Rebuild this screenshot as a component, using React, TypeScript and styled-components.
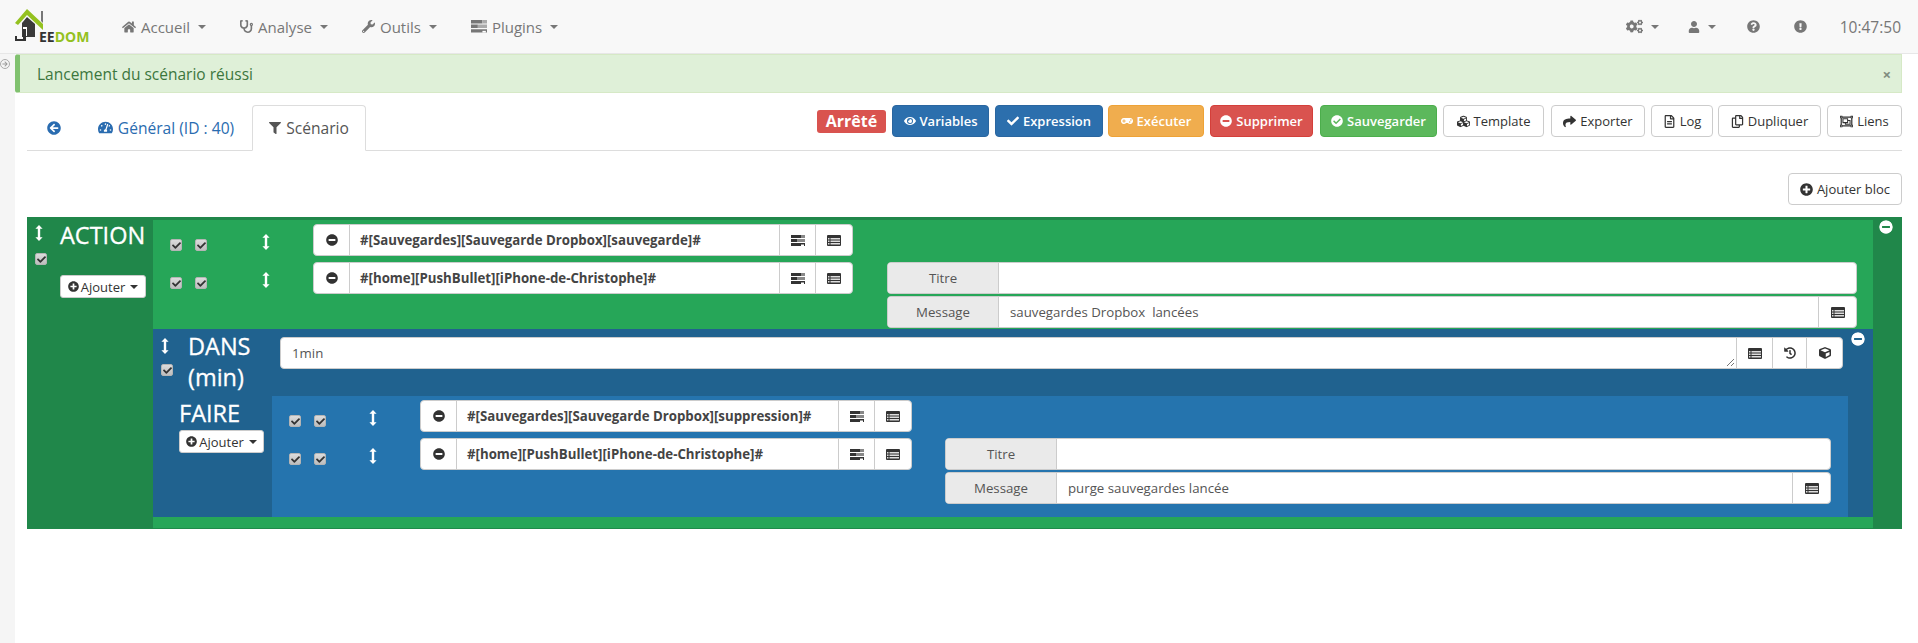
import React from 'react'
import styled, { createGlobalStyle } from 'styled-components'
import {
  FaHome,
  FaStethoscope,
  FaWrench,
  FaCogs,
  FaUser,
  FaQuestionCircle,
  FaExclamationCircle,
  FaArrowCircleLeft,
  FaTachometerAlt,
  FaFilter,
  FaEye,
  FaCheck,
  FaMinusCircle,
  FaCheckCircle,
  FaPlusCircle,
  FaCubes,
  FaShare,
  FaRegFileAlt,
  FaRegCopy,
  FaRegObjectGroup,
  FaHistory,
  FaCube,
  FaGamepad,
  FaArrowRight,
} from 'react-icons/fa'

const GlobalStyle = createGlobalStyle`
  html, body {
    margin: 0;
    padding: 0;
    background: #fff;
    font-family: "Open Sans", "Liberation Sans", sans-serif;
    font-size: 13px;
    color: #333;
  }
`

const Page = styled.div`
  width: 1918px;
  height: 643px;
  overflow: hidden;
  display: flex;
  flex-direction: column;
`

const Navbar = styled.nav`
  height: 53px;
  flex: none;
  display: flex;
  align-items: center;
  background: #f8f8f8;
  border-bottom: 1px solid #e7e7e7;
  color: #777;
  font-size: 15px;
`

const LogoBox = styled.div`
  width: 122px;
  padding-left: 15px;
  flex: none;
  box-sizing: border-box;
  display: flex;
`

const NavItem = styled.div<{ $gap: number }>`
  display: flex;
  align-items: center;
  gap: 5px;
  margin-right: ${p => p.$gap}px;
`

const NavRight = styled.div`
  margin-left: auto;
  display: flex;
  align-items: center;
  padding-right: 17px;
`

const Caret = styled.span<{ $size?: number }>`
  display: inline-block;
  margin-left: 3px;
  border-top: ${p => p.$size ?? 4}px solid currentColor;
  border-left: ${p => p.$size ?? 4}px solid transparent;
  border-right: ${p => p.$size ?? 4}px solid transparent;
`

const Clock = styled.span`
  margin-left: 33px;
  font-size: 15.500px;
`

const Body = styled.div`
  flex: 1;
  display: flex;
`

const Rail = styled.aside`
  width: 15px;
  flex: none;
  background: #f5f5f5;
  color: #999;
  padding-top: 5px;
  box-sizing: border-box;
`

const RailKnob = styled.span`
  display: flex;
  align-items: center;
  justify-content: center;
  width: 10px;
  height: 10px;
  border: 1px solid #aaa;
  border-radius: 50%;
  box-sizing: border-box;
  font-size: 6px;
`

const Main = styled.main`
  width: 1887px;
  flex: none;
`

const Alert = styled.div`
  height: 39px;
  box-sizing: border-box;
  display: flex;
  align-items: center;
  justify-content: space-between;
  background: #dff0d8;
  border: 1px solid #d6e9c6;
  border-left: 5px solid #80c16f;
  border-radius: 3px 0 0 3px;
  color: #3c763d;
  font-size: 15.500px;
  padding: 0 10px 0 17px;
`

const Close = styled.span`
  color: #7f8c80;
  font-size: 15px;
  font-weight: 700;
`

const TabBar = styled.div`
  margin: 12px 0 0 12px;
  height: 45px;
  display: flex;
  align-items: flex-end;
  justify-content: space-between;
  border-bottom: 1px solid #ddd;
`

const Tabs = styled.div`
  display: flex;
  height: 45px;
`

const Tab = styled.div<{ $active?: boolean; $width: number }>`
  width: ${p => p.$width}px;
  box-sizing: border-box;
  display: flex;
  align-items: center;
  justify-content: center;
  gap: 5px;
  font-size: 15.600px;
  color: ${p => (p.$active ? '#555' : '#2a6cb0')};
  ${p =>
    p.$active &&
    `
    background: #fff;
    border: 1px solid #ddd;
    border-bottom: 1px solid #fff;
    border-radius: 4px 4px 0 0;
    height: 46px;
  `}
`

const Actions = styled.div`
  display: flex;
  align-items: center;
  height: 32px;
  margin-bottom: 13px;
`

const Status = styled.span`
  width: 69px;
  height: 23px;
  background: #d9534f;
  color: #fff;
  font-weight: 700;
  font-size: 16px;
  border-radius: 3px;
  display: flex;
  align-items: center;
  justify-content: center;
  margin-right: 6px;
`

const colours = {
  primary: ['#2c6fad', '#2a66a0', '#fff'],
  warning: ['#f0ad4e', '#eea236', '#fff'],
  danger: ['#d9534f', '#d43f3a', '#fff'],
  success: ['#5cb85c', '#4cae4c', '#fff'],
  plain: ['#fff', '#ccc', '#333'],
}

const Button = styled.button<{ $kind: keyof typeof colours; $width: number; $gap?: number }>`
  width: ${p => p.$width}px;
  height: 32px;
  margin-right: ${p => p.$gap ?? 6}px;
  padding: 0;
  display: flex;
  align-items: center;
  justify-content: center;
  gap: 4px;
  font-family: inherit;
  font-size: 13px;
  font-weight: ${p => (p.$kind === 'plain' ? 400 : 600)};
  border-radius: 4px;
  background: ${p => colours[p.$kind][0]};
  border: 1px solid ${p => colours[p.$kind][1]};
  color: ${p => colours[p.$kind][2]};
  & svg {
    font-size: ${p => (p.$kind === 'plain' ? 13 : 12)}px;
  }
`

const AddRow = styled.div`
  display: flex;
  justify-content: flex-end;
  margin-top: 22px;
  height: 32px;
  margin-bottom: 12px;
`

const Outer = styled.section`
  margin-left: 12px;
  height: 312px;
  display: flex;
  background: #20874a;
`

const Side = styled.div<{ $width: number }>`
  width: ${p => p.$width}px;
  flex: none;
  display: flex;
  box-sizing: border-box;
`

const HandleCol = styled.div<{ $width: number; $top: number; $pad: number }>`
  width: ${p => p.$width}px;
  padding-top: ${p => p.$top}px;
  padding-left: ${p => p.$pad}px;
  box-sizing: border-box;
  flex: none;
  display: flex;
  flex-direction: column;
  align-items: flex-start;
`

const Spacer = styled.div<{ $height: number }>`
  height: ${p => p.$height}px;
  flex: none;
`

const MoveGlyph = styled.svg`
  display: block;
  flex: none;
`

const Move = () => (
  <MoveGlyph width="8" height="16" viewBox="0 0 8 16">
    <path
      d="M4 0 L7.600 3.800 L5.200 3.800 L5.200 12.200 L7.600 12.200 L4 16 L0.400 12.200 L2.800 12.200 L2.800 3.800 L0.400 3.800 Z"
      fill="#fff"
    />
  </MoveGlyph>
)

const CheckBase = styled.span`
  width: 12px;
  height: 12px;
  flex: none;
  box-sizing: border-box;
  display: flex;
  align-items: center;
  justify-content: center;
  background: linear-gradient(#dcdcdc, #bebebe);
  border: 1px solid #b5b5b5;
  border-radius: 2px;
  color: #333;
  font-size: 9px;
`

const Check = () => (
  <CheckBase>
    <FaCheck />
  </CheckBase>
)

const BlockTitle = styled.div`
  color: #fff;
  font-size: 23.500px;
  line-height: 31px;
  -webkit-text-stroke: 0.3px #fff;
`

const TitleCol = styled.div<{ $top: number }>`
  padding-top: ${p => p.$top}px;
`

const AddButton = styled.span<{ $width: number; $top: number }>`
  width: ${p => p.$width}px;
  height: 23px;
  margin-top: ${p => p.$top}px;
  background: #fff;
  border: 1px solid #ccc;
  border-radius: 3px;
  box-sizing: border-box;
  display: flex;
  align-items: center;
  justify-content: center;
  gap: 2px;
  font-size: 13px;
  color: #333;
`

const Center = styled.div`
  flex: 1;
  display: flex;
  flex-direction: column;
  padding-top: 3px;
`

const ActionArea = styled.div<{ $tone: 'green' | 'blue'; $height: number; $right?: number }>`
  background: ${p => (p.$tone === 'green' ? '#26a658' : '#2574ae')};
  height: ${p => p.$height}px;
  flex: none;
  padding: 4px ${p => p.$right ?? 16}px 0 17px;
  display: flex;
  flex-direction: column;
  gap: 6px;
  box-sizing: border-box;
`

const Row = styled.div<{ $moveCol: number }>`
  display: grid;
  grid-template-columns: 55px ${p => p.$moveCol}px auto 1fr;
  align-items: start;
`

const Checks = styled.div`
  display: flex;
  gap: 13px;
  padding-top: 15px;
`

const MoveCell = styled.div<{ $width: number }>`
  padding-top: 10px;
  display: flex;
  justify-content: center;
  width: ${p => p.$width}px;
`

const Group = styled.div<{ $width?: number }>`
  height: 32px;
  flex: none;
  width: ${p => (p.$width ? `${p.$width}px` : '100%')};
  box-sizing: border-box;
  display: flex;
  background: #fff;
  border: 1px solid #ccc;
  border-radius: 4px;
  font-size: 13.250px;
  color: #555;
  overflow: hidden;
`

const Addon = styled.span<{ $width: number }>`
  width: ${p => p.$width}px;
  flex: none;
  box-sizing: border-box;
  display: flex;
  align-items: center;
  justify-content: center;
  color: #333;
  border-left: 1px solid #ccc;
  &:first-child {
    border-left: 0;
  }
`

const Cmd = styled.span`
  flex: 1;
  border-left: 1px solid #ccc;
  display: flex;
  align-items: center;
  padding-left: 10px;
  font-weight: 700;
  color: #444;
`

const Field = styled.span`
  flex: 1;
  display: flex;
  align-items: center;
  padding-left: 11px;
  color: #555;
  white-space: pre;
  position: relative;
`

const Label = styled.span`
  width: 111px;
  flex: none;
  box-sizing: border-box;
  background: #eaeaea;
  border-right: 1px solid #ccc;
  display: flex;
  align-items: center;
  justify-content: center;
  color: #555;
`

const Options = styled.div<{ $left: number }>`
  margin-left: ${p => p.$left}px;
  display: flex;
  flex-direction: column;
  gap: 2px;
`

const DansBlock = styled.div`
  background: #20628f;
  display: flex;
  height: 188px;
  flex: none;
`

const DansSide = styled.div`
  width: 119px;
  flex: none;
  display: flex;
  flex-direction: column;
`

const DansHead = styled.div`
  display: flex;
  height: 67px;
`

const FaireHead = styled.div`
  padding: 2px 0 0 26px;
`

const DansMain = styled.div`
  flex: 1;
  display: flex;
  flex-direction: column;
`

const DansInputRow = styled.div`
  height: 67px;
  padding: 8px 0 0 8px;
  box-sizing: border-box;
  display: flex;
  align-items: flex-start;
`

const Grip = styled.svg`
  position: absolute;
  right: 1px;
  bottom: 1px;
`

const Band = styled.div`
  height: 12px;
  background: #26a658;
  border-bottom: 1px solid #1f8a4a;
  box-sizing: border-box;
`

const RightCol = styled.div<{ $width: number; $left: number; $colour: string }>`
  width: ${p => p.$width}px;
  flex: none;
  padding: 3px 0 0 ${p => p.$left}px;
  box-sizing: border-box;
  color: #fff;
  display: flex;
  align-items: flex-start;
  & > svg {
    background: ${p => p.$colour};
    border-radius: 50%;
  }
`

const TasksIcon = ({ dark = '#333', mid = '#888', size = 14 }) => (
  <svg width={size} height={(size * 11) / 14} viewBox="0 0 14 11">
    <path d="M0 0h10v3H0zM0 4h6v3H0zM0 8h14v3H0z" fill={dark} />
    <path d="M10 0h4v3h-4zM6 4h8v3H6z" fill={mid} />
    <path d="M10 9.500h3V11h-3z" fill="#fff" />
  </svg>
)

const ListIcon = () => (
  <svg width="14" height="11" viewBox="0 0 14 11">
    <path d="M1 0h12a1 1 0 0 1 1 1v9a1 1 0 0 1-1 1H1a1 1 0 0 1-1-1V1a1 1 0 0 1 1-1z" fill="#333" />
    <path
      d="M1 3h1.500v1.500H1zM3.500 3H13v1.500H3.500zM1 5.500h1.500V7H1zM3.500 5.500H13V7H3.500zM1 8h1.500v1.500H1zM3.500 8H13v1.500H3.500z"
      fill="#ddd"
    />
  </svg>
)

const Logo = () => (
  <svg width="80" height="38" viewBox="0 0 80 38">
    <path d="M0 15 L12 1 L28 16 L28 22 L12 7 L3 17 Z" fill="#94c11f" />
    <path d="M7 15 L12 9 L20 16 V29 H7 Z" fill="#3a3a3a" />
    <path d="M26 3 h2 v12 l-2-2 z" fill="#777" />
    <rect x="8" y="19" width="4" height="9" fill="#fff" />
    <path d="M8 21 h3 v12 H0 v-5 h2 v3 h6 z" fill="#333" />
    <text x="24" y="34" fontFamily="Open Sans, sans-serif" fontSize="14" fontWeight="700" fill="#333">
      EE<tspan fill="#94c11f">DOM</tspan>
    </text>
  </svg>
)

const RowTools = () => (
  <>
    <Addon $width={36}>
      <TasksIcon />
    </Addon>
    <Addon $width={37}>
      <ListIcon />
    </Addon>
  </>
)

const CmdGroup = ({ text, width }: { text: string; width: number }) => (
  <Group $width={width}>
    <Addon $width={35}>
      <FaMinusCircle size={12} />
    </Addon>
    <Cmd>{text}</Cmd>
    <RowTools />
  </Group>
)

const OptionFields = ({ left, message }: { left: number; message: string }) => (
  <Options $left={left}>
    <Group>
      <Label>Titre</Label>
      <Field />
    </Group>
    <Group>
      <Label>Message</Label>
      <Field>{message}</Field>
      <Addon $width={38}>
        <ListIcon />
      </Addon>
    </Group>
  </Options>
)

const ActionRow = ({
  moveCol,
  moveWidth,
  children,
}: {
  moveCol: number
  moveWidth: number
  children: React.ReactNode
}) => (
  <Row $moveCol={moveCol}>
    <Checks>
      <Check />
      <Check />
    </Checks>
    <MoveCell $width={moveWidth}>
      <Move />
    </MoveCell>
    {children}
  </Row>
)

export default function App() {
  return (
    <Page>
      <GlobalStyle />
      <Navbar>
        <LogoBox>
          <Logo />
        </LogoBox>
        <NavItem $gap={34}>
          <FaHome size={14} />
          Accueil
          <Caret />
        </NavItem>
        <NavItem $gap={34}>
          <FaStethoscope size={13} />
          Analyse
          <Caret />
        </NavItem>
        <NavItem $gap={34}>
          <FaWrench size={13} />
          Outils
          <Caret />
        </NavItem>
        <NavItem $gap={0}>
          <TasksIcon dark="#777" mid="#aaa" size={16} />
          Plugins
          <Caret />
        </NavItem>
        <NavRight>
          <NavItem $gap={29}>
            <FaCogs size={17} />
            <Caret />
          </NavItem>
          <NavItem $gap={31}>
            <FaUser size={12} />
            <Caret />
          </NavItem>
          <NavItem $gap={34}>
            <FaQuestionCircle size={13} />
          </NavItem>
          <NavItem $gap={0}>
            <FaExclamationCircle size={13} />
          </NavItem>
          <Clock>10:47:50</Clock>
        </NavRight>
      </Navbar>
      <Body>
        <Rail>
          <RailKnob>
            <FaArrowRight />
          </RailKnob>
        </Rail>
        <Main>
          <Alert>
            Lancement du scénario réussi
            <Close>×</Close>
          </Alert>
          <TabBar>
            <Tabs>
              <Tab $width={53}>
                <FaArrowCircleLeft size={14} />
              </Tab>
              <Tab $width={172}>
                <FaTachometerAlt size={15} />
                Général (ID : 40)
              </Tab>
              <Tab $width={114} $active>
                <FaFilter size={12} />
                Scénario
              </Tab>
            </Tabs>
            <Actions>
              <Status>Arrêté</Status>
              <Button $kind="primary" $width={97}>
                <FaEye />
                Variables
              </Button>
              <Button $kind="primary" $width={108} $gap={5}>
                <FaCheck />
                Expression
              </Button>
              <Button $kind="warning" $width={96}>
                <FaGamepad />
                Exécuter
              </Button>
              <Button $kind="danger" $width={103} $gap={7}>
                <FaMinusCircle />
                Supprimer
              </Button>
              <Button $kind="success" $width={117}>
                <FaCheckCircle />
                Sauvegarder
              </Button>
              <Button $kind="plain" $width={101} $gap={7}>
                <FaCubes />
                Template
              </Button>
              <Button $kind="plain" $width={94}>
                <FaShare />
                Exporter
              </Button>
              <Button $kind="plain" $width={62} $gap={5}>
                <FaRegFileAlt />
                Log
              </Button>
              <Button $kind="plain" $width={103}>
                <FaRegCopy />
                Dupliquer
              </Button>
              <Button $kind="plain" $width={75} $gap={0}>
                <FaRegObjectGroup />
                Liens
              </Button>
            </Actions>
          </TabBar>
          <AddRow>
            <Button $kind="plain" $width={114} $gap={0}>
              <FaPlusCircle />
              Ajouter bloc
            </Button>
          </AddRow>
          <Outer>
            <Side $width={126}>
              <HandleCol $width={33} $top={8} $pad={8}>
                <Move />
                <Spacer $height={12} />
                <Check />
              </HandleCol>
              <TitleCol $top={3}>
                <BlockTitle>ACTION</BlockTitle>
                <AddButton $width={86} $top={24}>
                  <FaPlusCircle size={11} />
                  Ajouter
                  <Caret />
                </AddButton>
              </TitleCol>
            </Side>
            <Center>
              <ActionArea $tone="green" $height={109}>
                <ActionRow moveCol={88} moveWidth={81}>
                  <CmdGroup text="#[Sauvegardes][Sauvegarde Dropbox][sauvegarde]#" width={540} />
                </ActionRow>
                <ActionRow moveCol={88} moveWidth={81}>
                  <CmdGroup text="#[home][PushBullet][iPhone-de-Christophe]#" width={540} />
                  <OptionFields left={34} message="sauvegardes Dropbox  lancées" />
                </ActionRow>
              </ActionArea>
              <DansBlock>
                <DansSide>
                  <DansHead>
                    <HandleCol $width={35} $top={9} $pad={8}>
                      <Move />
                      <Spacer $height={10} />
                      <Check />
                    </HandleCol>
                    <TitleCol $top={2}>
                      <BlockTitle>DANS</BlockTitle>
                      <BlockTitle>(min)</BlockTitle>
                    </TitleCol>
                  </DansHead>
                  <FaireHead>
                    <BlockTitle>FAIRE</BlockTitle>
                    <AddButton $width={85} $top={1}>
                      <FaPlusCircle size={11} />
                      Ajouter
                      <Caret />
                    </AddButton>
                  </FaireHead>
                </DansSide>
                <DansMain>
                  <DansInputRow>
                    <Group $width={1563}>
                      <Field>
                        1min
                        <Grip width="9" height="9" viewBox="0 0 9 9">
                          <path d="M1 8 L8 1 M5 8 L8 5" stroke="#777" strokeWidth="1" />
                        </Grip>
                      </Field>
                      <Addon $width={36}>
                        <ListIcon />
                      </Addon>
                      <Addon $width={34}>
                        <FaHistory size={12} />
                      </Addon>
                      <Addon $width={36}>
                        <FaCube size={12} />
                      </Addon>
                    </Group>
                  </DansInputRow>
                  <ActionArea $tone="blue" $height={121} $right={17}>
                    <ActionRow moveCol={76} moveWidth={58}>
                      <CmdGroup text="#[Sauvegardes][Sauvegarde Dropbox][suppression]#" width={492} />
                    </ActionRow>
                    <ActionRow moveCol={76} moveWidth={58}>
                      <CmdGroup text="#[home][PushBullet][iPhone-de-Christophe]#" width={492} />
                      <OptionFields left={33} message="purge sauvegardes lancée" />
                    </ActionRow>
                  </ActionArea>
                </DansMain>
                <RightCol $width={25} $left={3} $colour="#20628f">
                  <FaMinusCircle size={14} />
                </RightCol>
              </DansBlock>
              <Band />
            </Center>
            <RightCol $width={29} $left={6} $colour="#20874a">
              <FaMinusCircle size={14} />
            </RightCol>
          </Outer>
        </Main>
      </Body>
    </Page>
  )
}
